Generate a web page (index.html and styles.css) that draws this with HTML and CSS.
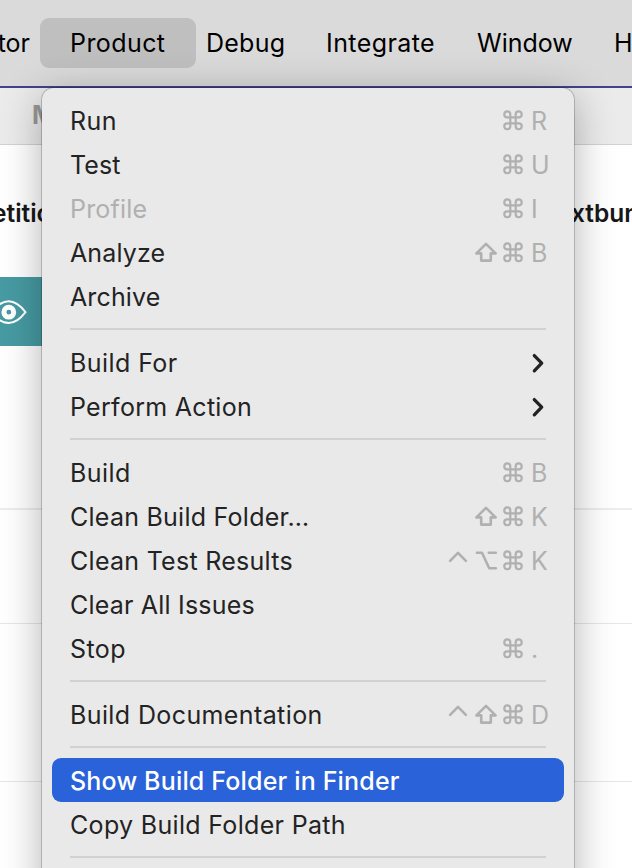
FILE: index.html
```html
<!DOCTYPE html>
<html lang="en">
<head>
<meta charset="utf-8">
<title>Product menu</title>
<link rel="stylesheet" href="styles.css">
</head>
<body>
<svg class="sprite" aria-hidden="true">
  <symbol id="cmd" viewBox="0 0 28 24"><path d="M11.3 9.3H7.7a3 3 0 1 1 3.6-3V18.3a3 3 0 1 1-3.6-3H20.3a3 3 0 1 1-3.6 3V6.3a3 3 0 1 1 3.6 3H11.3" class="thin" /></symbol>
  <symbol id="shift" viewBox="0 0 28 24"><path d="M14 3.9 23.6 13.4H18.8V20.6H9.2V13.4H4.4Z"/></symbol>
  <symbol id="opt" viewBox="0 0 28 24"><path d="M4.9 4.7H10L17.2 20.3H23.8M16.8 4.7H23.8"/></symbol>
  <symbol id="ctrl" viewBox="0 0 28 24"><path d="M6.1 12.9 14 4.9 21.9 12.9"/></symbol>
  <symbol id="chev" viewBox="0 0 16 24"><path d="M4.3 4.6 11.7 12.2 4.3 19.8"/></symbol>
</svg>
<div class="screen">
  <nav class="menubar">
    <span class="title editor">tor</span>
    <span class="title product">Product</span>
    <span class="title debug">Debug</span>
    <span class="title integrate">Integrate</span>
    <span class="title window">Window</span>
    <span class="title help">H</span>
  </nav>
  <main class="page">
    <div class="toolbar">M</div>
    <div class="headings"><span>etitio</span><span class="right">xtbundle</span></div>
    <div class="banner">
      <svg width="42" height="69" viewBox="0 0 42 69"><path d="M-9 35.2Q9 13.4 25.5 35.2Q9 57 -9 35.2Z"/><circle cx="8.8" cy="35.2" r="4.9"/></svg>
    </div>
    <div class="rows"><div class="r1"></div><div class="r2"></div><div class="r3"></div></div>
  </main>
  <div class="menu">
    <div class="item"><span class="w-run">Run</span><span class="keys"><svg><use href="#cmd"/></svg><b>R</b></span></div>
    <div class="item"><span class="w-test">Test</span><span class="keys"><svg><use href="#cmd"/></svg><b>U</b></span></div>
    <div class="item disabled"><span class="w-profile">Profile</span><span class="keys"><svg><use href="#cmd"/></svg><b>I</b></span></div>
    <div class="item"><span class="w-analyze">Analyze</span><span class="keys"><svg><use href="#shift"/></svg><svg><use href="#cmd"/></svg><b>B</b></span></div>
    <div class="item"><span class="w-archive">Archive</span></div>
    <hr>
    <div class="item"><span class="w-for">Build For</span><svg class="chevron"><use href="#chev"/></svg></div>
    <div class="item"><span class="w-perform">Perform Action</span><svg class="chevron"><use href="#chev"/></svg></div>
    <hr>
    <div class="item"><span class="w-build">Build</span><span class="keys"><svg><use href="#cmd"/></svg><b>B</b></span></div>
    <div class="item"><span class="w-clean">Clean Build Folder…</span><span class="keys"><svg><use href="#shift"/></svg><svg><use href="#cmd"/></svg><b>K</b></span></div>
    <div class="item"><span class="w-results">Clean Test Results</span><span class="keys"><svg><use href="#ctrl"/></svg><svg><use href="#opt"/></svg><svg><use href="#cmd"/></svg><b>K</b></span></div>
    <div class="item"><span class="w-issues">Clear All Issues</span></div>
    <div class="item"><span class="w-stop">Stop</span><span class="keys"><svg><use href="#cmd"/></svg><b>.</b></span></div>
    <hr>
    <div class="item"><span class="w-docs">Build Documentation</span><span class="keys"><svg><use href="#ctrl"/></svg><svg><use href="#shift"/></svg><svg><use href="#cmd"/></svg><b>D</b></span></div>
    <hr>
    <div class="item selected"><span class="w-show">Show Build Folder in Finder</span></div>
    <div class="item"><span class="w-copy">Copy Build Folder Path</span></div>
    <hr>
  </div>
</div>
</body>
</html>
```
FILE: styles.css
```css
* { box-sizing: border-box; }
body { margin: 0; font-family: Inter, "Liberation Sans", sans-serif; font-size: 25px; color: #232323; }
.sprite { position: absolute; width: 0; height: 0; }
.screen { position: relative; width: 632px; height: 868px; overflow: hidden; background: #fff; }
.menubar { display: flex; align-items: center; height: 88px; background: #dadada; border-bottom: 2px solid #45418a; color: #000; }
.title { flex: none; height: 50px; line-height: 50px; white-space: nowrap; }
.editor { width: 40px; padding-right: 10px; display: flex; justify-content: flex-end; }
.product { width: 156px; padding-left: 30px; border-radius: 9px; background: #bfbfbf; letter-spacing: .42px; }
.debug { width: 120px; padding-left: 10px; letter-spacing: .25px; }
.integrate { width: 150px; padding-left: 10px; letter-spacing: .42px; }
.window { width: 138px; padding-left: 11px; }
.help { padding-left: 10px; }
.toolbar { height: 57px; padding-left: 32px; line-height: 55px; background: #ebebeb; border-bottom: 1px solid #d2d2d2; color: #999; font-weight: 700; }
.headings { display: flex; justify-content: space-between; height: 131.5px; padding-top: 53px; line-height: 30px; font-size: 24.5px; font-weight: 600; color: #171717; }
.headings span { width: 60px; margin-left: -8px; white-space: nowrap; overflow: hidden; }
.headings .right { width: 61px; margin: 0; }
.banner { width: 100px; height: 69.5px; background: #479ba3; }
.banner svg { display: block; }
.banner path { fill: none; stroke: #fff; stroke-width: 2; }
.banner circle { fill: none; stroke: #fff; stroke-width: 5; }
.rows div { border-bottom: 1px solid #e6e6e6; }
.r1 { height: 164px; }
.rows .r1 { border-bottom: 2px solid #ededed; }
.r2 { height: 114px; }
.r3 { height: 158px; }
.menu { position: absolute; left: 42px; top: 88px; width: 532px; height: 820px; padding: 10px; border-radius: 12px; background: #e9e9e9; box-shadow: 0 0 0 1px rgba(0,0,0,.19), 0 8px 40px rgba(0,0,0,.31); }
.item { display: flex; align-items: center; justify-content: space-between; height: 44px; padding: 2px 12px 0 18px; border-radius: 9px; white-space: nowrap; }
.selected { background: #2962d9; color: #fff; font-weight: 500; }
.disabled { color: #b0b0b0; }
.w-run { letter-spacing: .4px; }
.w-test, .w-analyze, .w-archive { letter-spacing: .12px; }
.w-profile, .w-issues { letter-spacing: .2px; }
.w-for, .w-build, .w-stop { letter-spacing: .43px; }
.w-perform { letter-spacing: .29px; }
.w-clean { letter-spacing: .25px; }
.w-results { letter-spacing: .28px; }
.w-docs { letter-spacing: .39px; }
.w-show { letter-spacing: .17px; }
.w-copy { letter-spacing: .32px; }
.menu hr { height: 2px; margin: 10px 18px; border: 0; background: #d1d1d1; }
.keys { display: flex; align-items: center; color: #b0b0b0; }
.keys svg { width: 28px; height: 24px; margin-left: -.5px; margin-top: -2px; fill: none; stroke: #b0b0b0; stroke-width: 2.6; stroke-linecap: round; stroke-linejoin: round; }
.thin { stroke-width: 2.2; }
.keys b { width: 21px; margin-left: 4px; font-weight: 400; }
.chevron { width: 16px; height: 24px; margin: -1px 6.5px 0 0; fill: none; stroke: #222; stroke-width: 3.3; stroke-linecap: round; stroke-linejoin: round; }
```
